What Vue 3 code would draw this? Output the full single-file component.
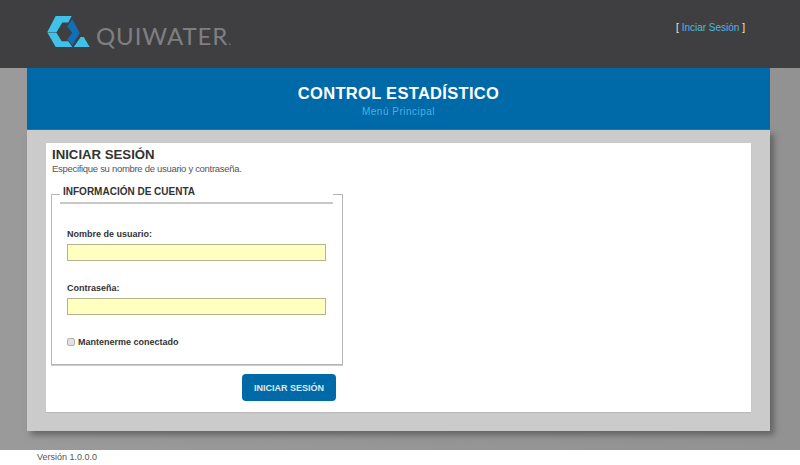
<script setup>
const fields = [
  { label: 'Nombre de usuario:', type: 'text' },
  { label: 'Contraseña:', type: 'password' },
]
</script>

<template>
  <div class="page">
    <header class="top">
      <div class="logo">
        <svg class="mark" width="44" height="32" viewBox="0 0 44 32">
          <polygon fill="#3fc1ea" points="8.7,0 24.7,0 21.3,6.6 15.3,6.6 9.7,16 0.3,16" />
          <polygon fill="#3fc1ea" points="0.3,16.6 9.3,16.6 14.7,25.3 21.3,25.3 25.3,31 8.7,31" />
          <polygon fill="#0f70b6" points="25.3,3.3 32.7,17 25.3,29.3 20.3,23 25.3,17 20.3,10.3" />
          <polygon fill="#3fc1ea" points="33.7,21 36.7,21 42.7,31 26.7,31" />
        </svg>
        <span class="brand">QUIWATER<small>.</small></span>
      </div>
      <div class="login-link">[ <a>Inciar Sesión</a> ]</div>
    </header>

    <main class="stage">
      <section class="banner">
        <h1>CONTROL ESTADÍSTICO</h1>
        <p>Menú Principal</p>
      </section>
      <section class="panel">
        <div class="sheet">
          <h2>INICIAR SESIÓN</h2>
          <p class="hint">Especifique su nombre de usuario y contraseña.</p>
          <div class="form-col">
            <fieldset>
              <legend>INFORMACIÓN DE CUENTA</legend>
              <div v-for="f in fields" :key="f.label" class="field">
                <label>{{ f.label }}</label>
                <input :type="f.type" />
              </div>
              <label class="check"><input type="checkbox" /><span>Mantenerme conectado</span></label>
            </fieldset>
            <div class="actions"><button type="button">INICIAR SESIÓN</button></div>
          </div>
        </div>
      </section>
    </main>

    <footer>Versión 1.0.0.0</footer>
  </div>
</template>

<style>
html, body { margin: 0; background: #fff; }
</style>

<style scoped>
* { box-sizing: border-box; }
.page {
  width: 800px;
  height: 465px;
  overflow: hidden;
  font-family: "Liberation Sans", Arial, sans-serif;
  background: #fff;
}
.top {
  height: 68px;
  background: #3f3f41;
  display: flex;
  justify-content: space-between;
  padding: 16px 55px 0 48px;
}
.logo { display: flex; align-items: flex-start; margin-left: -1px; }
.mark { display: block; }
.brand {
  font-family: Lato, sans-serif;
  font-weight: 400;
  font-size: 24px;
  line-height: 30px;
  letter-spacing: 0.9px;
  margin: 5px 0 0 5px;
  color: #7f7f81;
  white-space: nowrap;
}
.brand small { font-size: 12px; letter-spacing: 0; }
.login-link {
  margin-top: 5px;
  font-size: 10px;
  line-height: 14px;
  color: #f2eecb;
}
.login-link a { color: #4fb6e3; }
.stage {
  height: 382px;
  background: linear-gradient(90deg, #9a9a9a, #929293);
  padding: 0 30px 19px 27px;
}
.banner {
  height: 62px;
  background: #0069a8;
  border-bottom: 1px solid #1579b0;
  text-align: center;
  padding-top: 15px;
}
.banner h1 {
  margin: 0;
  font-size: 16.5px;
  line-height: 20px;
  letter-spacing: 0.3px;
  color: #fff;
}
.banner p {
  margin: 2px 0 0;
  font-size: 10px;
  line-height: 14px;
  letter-spacing: 0.5px;
  color: #4ab0e2;
}
.panel {
  height: 301px;
  background: #cbcbcb;
  padding: 13px 19px 19px;
  box-shadow: 4px 4px 6px rgba(60, 60, 60, 0.55);
}
.sheet {
  height: 269px;
  background: #fff;
  padding: 4px 5px 0 6px;
  box-shadow: 0 1px 1px #bbb;
}
h2 {
  margin: 0;
  font-size: 13.2px;
  line-height: 15px;
  color: #333;
}
.hint {
  margin: 0;
  font-size: 9.5px;
  line-height: 13px;
  letter-spacing: -0.3px;
  color: #555;
}
.form-col { width: 291px; margin-left: -1px; }
fieldset {
  margin: 10px 0 0;
  padding: 0 15px;
  width: 292px;
  min-width: 0;
  height: 180px;
  border: 1px solid #b5b5b5;
  box-shadow: 0 1px 0 #ccc;
}
legend {
  display: block;
  width: 273px;
  height: 19px;
  margin-left: -7px;
  padding: 0 0 0 3px;
  font-size: 10px;
  font-weight: bold;
  line-height: 14px;
  color: #333;
  border-bottom: 2px solid #c8c8c8;
}
.field { margin-top: 24px; }
.field + .field { margin-top: 21px; }
.field label {
  display: block;
  font-size: 9px;
  font-weight: bold;
  line-height: 12px;
  color: #333;
  margin-bottom: 4px;
}
.field input {
  display: block;
  width: 259px;
  height: 17px;
  margin: 0;
  padding: 0;
  background: #ffffc0;
  border: 1px solid #b3b38f;
  border-radius: 0;
  outline: none;
}
.check {
  display: flex;
  align-items: center;
  margin-top: 21px;
  font-size: 9px;
  font-weight: bold;
  line-height: 12px;
  color: #333;
}
.check input {
  appearance: none;
  width: 8px;
  height: 8px;
  margin: 0 3px 0 0;
  background: #e2e2e2;
  border: 1px solid #b0b0b0;
  border-radius: 2px;
}
.actions {
  display: flex;
  justify-content: flex-end;
  padding-right: 6px;
  margin-top: 9px;
}
button {
  width: 94px;
  height: 27px;
  padding: 0;
  background: #0069a8;
  color: #dfe9f0;
  border: none;
  border-radius: 4px;
  font: bold 9px "Liberation Sans", Arial, sans-serif;
}
footer {
  height: 15px;
  padding-left: 37px;
  font-size: 9px;
  line-height: 15px;
  color: #555;
}
</style>
